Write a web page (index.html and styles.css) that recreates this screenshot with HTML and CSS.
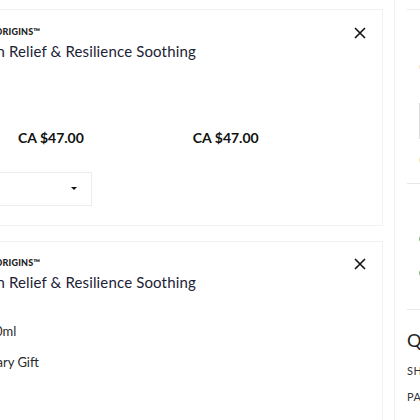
FILE: index.html
```html
<!DOCTYPE html>
<html>
<head>
<meta charset="utf-8">
<link rel="stylesheet" href="styles.css">
</head>
<body>
<div class="page">
  <div class="main">
    <div class="card card-one">
      <div class="card-head">
        <div class="head-text">
          <div class="brand">ORIGINS™</div>
          <div class="title">Mega-Mushroom Relief &amp; Resilience Soothing</div>
        </div>
        <button class="close" aria-label="Remove">
          <svg width="12" height="12" viewBox="0 0 12 12"><path d="M1 1L11 11M11 1L1 11" stroke="#111" stroke-width="1.6" fill="none"/></svg>
        </button>
      </div>
      <div class="prices">
        <div class="price">CA $47.00</div>
        <div class="price">CA $47.00</div>
      </div>
      <div class="select">
        <span class="caret"></span>
      </div>
    </div>
    <div class="card card-two">
      <div class="card-head">
        <div class="head-text">
          <div class="brand">ORIGINS™</div>
          <div class="title">Mega-Mushroom Relief &amp; Resilience Soothing</div>
        </div>
        <button class="close" aria-label="Remove">
          <svg width="12" height="12" viewBox="0 0 12 12"><path d="M1 1L11 11M11 1L1 11" stroke="#111" stroke-width="1.6" fill="none"/></svg>
        </button>
      </div>
      <div class="detail size">100ml</div>
      <div class="detail gift">Complimentary Gift</div>
    </div>
  </div>
  <div class="side">
    <div class="rule rule-first"></div>
    <div class="block block-a">
      <span class="dot dot-yellow dot-1"></span>
      <span class="thumb"></span>
      <span class="dot dot-yellow dot-2"></span>
    </div>
    <div class="rule"></div>
    <div class="block block-b">
      <span class="check check-1"></span>
      <span class="check check-2"></span>
    </div>
    <div class="rule"></div>
    <div class="side-title">Questions?</div>
    <div class="side-link link-1">SHIPPING</div>
    <div class="side-link link-2">PAYMENT</div>
  </div>
</div>
</body>
</html>
```
FILE: styles.css
```css
html, body {
  margin: 0;
  padding: 0;
  background: #fff;
}
body {
  width: 420px;
  height: 420px;
  overflow: hidden;
  font-family: "Lato", "Liberation Sans", sans-serif;
  color: #222;
}
.page {
  display: flex;
  gap: 11px;
  width: 700px;
  margin-left: -300px;
}
.main {
  width: 683px;
  flex: none;
  display: flex;
  flex-direction: column;
  gap: 15px;
  padding-top: 9px;
}
.card {
  border: 1px solid #f1f1f1;
  padding: 0 16px 0 300px;
  position: relative;
}
.card-one {
  height: 215px;
}
.card-two {
  height: 300px;
}
.card-head {
  display: flex;
  justify-content: space-between;
  align-items: flex-start;
  padding-top: 17px;
}
.head-text {
  margin-left: -112px;
}
.brand {
  font-family: "Lato", sans-serif;
  font-weight: 900;
  font-size: 9px;
  letter-spacing: 0.2px;
  color: #222;
  line-height: 10px;
  text-indent: 106px;
}
.title {
  font-family: "Lato", sans-serif;
  font-size: 15px;
  letter-spacing: 0.15px;
  color: #1c2235;
  line-height: 20px;
  margin-top: 4px;
  white-space: nowrap;
}
.close {
  border: 0;
  background: none;
  padding: 0;
  margin: 0;
  width: 12px;
  height: 12px;
  display: block;
}
.close svg { display: block; }
.prices {
  display: flex;
  gap: 109px;
  margin-top: 69px;
  padding-left: 17px;
}
.price {
  font-weight: 700;
  font-size: 14px;
  color: #111;
  line-height: 16px;
}
.select {
  margin-top: 26px;
  margin-left: -120px;
  width: 209px;
  height: 32px;
  border: 1px solid #ececec;
  position: relative;
}
.caret {
  position: absolute;
  right: 14px;
  top: 14px;
  width: 0;
  height: 0;
  border-left: 3px solid transparent;
  border-right: 3px solid transparent;
  border-top: 3.5px solid #111;
}
.card-two .card-head {
  padding-top: 16px;
}
.detail {
  font-size: 13px;
  color: #2a2a2a;
  line-height: 16px;
  white-space: nowrap;
}
.size {
  margin-top: 31px;
  margin-left: -21px;
}
.gift {
  margin-top: 15px;
  margin-left: -74px;
}
.side {
  flex: none;
  width: 200px;
  height: 420px;
  border-left: 1px solid #f2f2f2;
  padding-left: 12px;
  display: flex;
  flex-direction: column;
}
.rule {
  height: 1px;
  background: #e8e8e8;
  flex: none;
}
.rule-first {
  margin-top: 9px;
  background: #eeeeee;
}
.block {
  position: relative;
  flex: none;
}
.block-a { height: 173px; }
.block-b { height: 125px; }
.dot {
  position: absolute;
  width: 6px;
  height: 6px;
  border-radius: 50%;
}
.dot-yellow { background: #f3e6b8; }
.dot-1 { left: 12px; top: 54px; }
.dot-2 { left: 12px; top: 147px; }
.thumb {
  position: absolute;
  left: 12px;
  top: 93px;
  width: 60px;
  height: 34px;
  border: 1px solid #dcdcdc;
}
.check {
  position: absolute;
  width: 8px;
  height: 8px;
  border-radius: 50%;
  border: 1.5px solid #7ab86a;
}
.check-1 { left: 12px; top: 50px; }
.check-2 { left: 12px; top: 84px; }
.side-title {
  margin-top: 19px;
  font-size: 18px;
  line-height: 22px;
  color: #222;
  letter-spacing: 0.5px;
}
.side-link {
  font-size: 11px;
  line-height: 14px;
  color: #333;
  letter-spacing: 0.5px;
}
.link-1 { margin-top: 13px; }
.link-2 { margin-top: 12px; }
```
